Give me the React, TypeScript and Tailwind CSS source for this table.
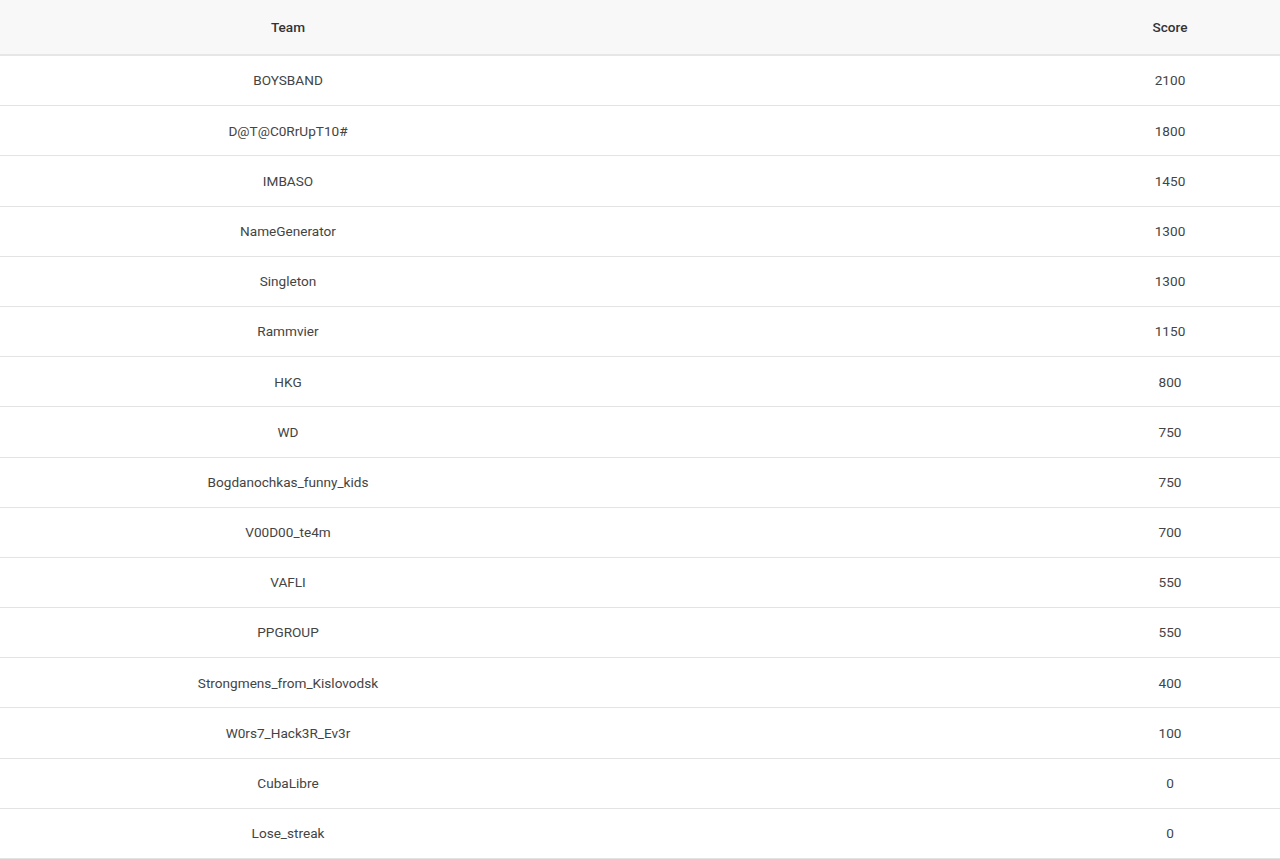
const rows = [
  { team: "BOYSBAND", score: 2100 },
  { team: "D@T@C0RrUpT10#", score: 1800 },
  { team: "IMBASO", score: 1450 },
  { team: "NameGenerator", score: 1300 },
  { team: "Singleton", score: 1300 },
  { team: "Rammvier", score: 1150 },
  { team: "HKG", score: 800 },
  { team: "WD", score: 750 },
  { team: "Bogdanochkas_funny_kids", score: 750 },
  { team: "V00D00_te4m", score: 700 },
  { team: "VAFLI", score: 550 },
  { team: "PPGROUP", score: 550 },
  { team: "Strongmens_from_Kislovodsk", score: 400 },
  { team: "W0rs7_Hack3R_Ev3r", score: 100 },
  { team: "CubaLibre", score: 0 },
  { team: "Lose_streak", score: 0 },
];

export default function App() {
  return (
    <div className="w-[1280px] min-h-[859px] bg-white font-['Roboto',sans-serif] text-[13.6px] text-[#444]">
      {/* Header */}
      <div className="flex h-[56px] items-center bg-[#f8f8f8] border-b-[2px] border-[#e6e6e6] font-medium text-[#333]">
        <div className="w-[576px] text-center">Team</div>
        <div className="ml-auto w-[220px] text-center">Score</div>
      </div>

      {/* Rows */}
      {rows.map((row, i) => (
        <div
          key={i}
          className="flex h-[50.2px] items-center border-b border-[#e3e3e3]"
        >
          <div className="w-[576px] text-center">{row.team}</div>
          <div className="ml-auto w-[220px] text-center">{row.score}</div>
        </div>
      ))}
    </div>
  );
}
